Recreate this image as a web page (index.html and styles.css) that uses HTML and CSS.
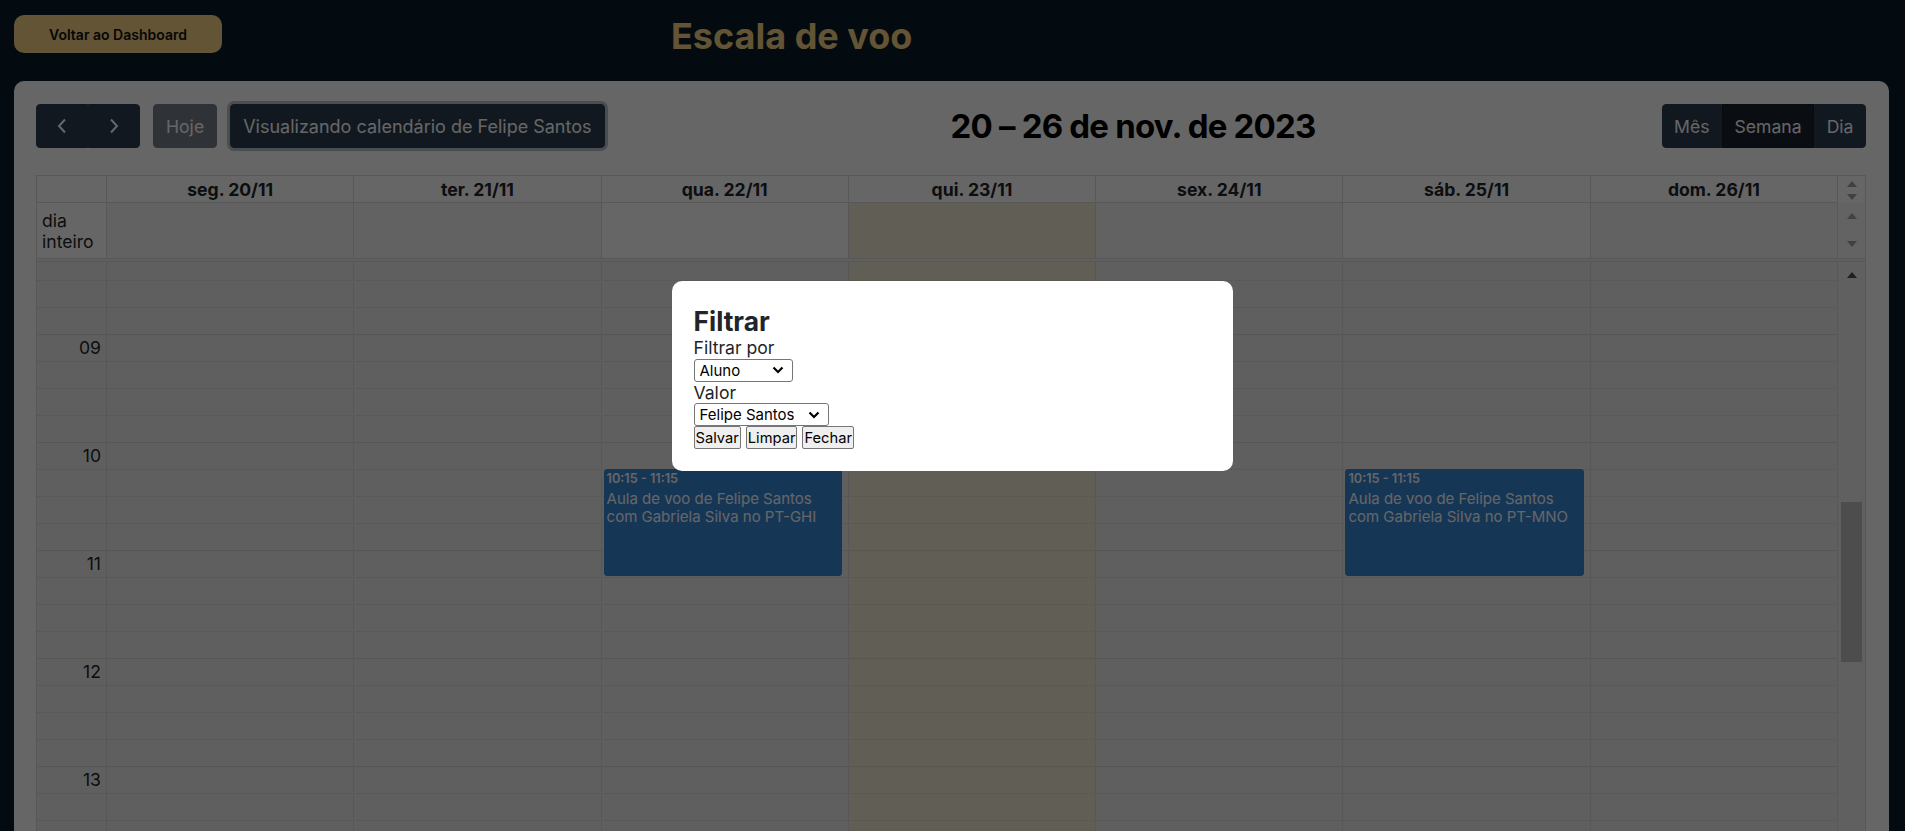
FILE: index.html
```html
<!DOCTYPE html>
<html lang="pt-BR">
<head>
<meta charset="utf-8">
<title>Escala de voo</title>
<link rel="stylesheet" href="styles.css">
</head>
<body>
<div class="page">
  <header class="topbar">
    <button class="back-btn" type="button">Voltar ao Dashboard</button>
    <h1 class="page-title">Escala de voo</h1>
  </header>

  <main class="card">
    <div class="toolbar">
      <div class="chunk">
        <div class="btn-group">
          <button class="fc-btn icon-btn" type="button" aria-label="anterior">
            <svg width="10" height="16" viewBox="0 0 10 16"><path d="M8 1.5 L2 8 L8 14.5" fill="none" stroke="#fff" stroke-width="2"/></svg>
          </button>
          <button class="fc-btn icon-btn" type="button" aria-label="próximo">
            <svg width="10" height="16" viewBox="0 0 10 16"><path d="M2 1.5 L8 8 L2 14.5" fill="none" stroke="#fff" stroke-width="2"/></svg>
          </button>
        </div>
        <button class="fc-btn disabled" type="button">Hoje</button>
        <button class="fc-btn focused" type="button">Visualizando calendário de Felipe Santos</button>
      </div>
      <h2 class="toolbar-title">20 – 26 de nov. de 2023</h2>
      <div class="chunk">
        <div class="btn-group">
          <button class="fc-btn" type="button">Mês</button>
          <button class="fc-btn active" type="button">Semana</button>
          <button class="fc-btn" type="button">Dia</button>
        </div>
      </div>
    </div>

    <div class="cal">
      <div class="row head-row">
        <div class="cell axis-cell"></div>
        <div class="cell day-head">seg. 20/11</div>
        <div class="cell day-head">ter. 21/11</div>
        <div class="cell day-head">qua. 22/11</div>
        <div class="cell day-head">qui. 23/11</div>
        <div class="cell day-head">sex. 24/11</div>
        <div class="cell day-head">sáb. 25/11</div>
        <div class="cell day-head">dom. 26/11</div>
        <div class="sb-cell sb-head"><span class="arr up dim"></span><span class="arr down dim"></span></div>
      </div>

      <div class="row allday-row">
        <div class="cell allday-label">dia inteiro</div>
        <div class="cell allday shade"></div>
        <div class="cell allday shade"></div>
        <div class="cell allday"></div>
        <div class="cell allday today"></div>
        <div class="cell allday shade"></div>
        <div class="cell allday"></div>
        <div class="cell allday shade"></div>
        <div class="sb-cell sb-allday"><span class="arr up dim"></span><span class="arr down dim"></span></div>
      </div>

      <div class="divider"></div>

      <div class="tg-body">
        <div class="tg-slots">
          <div class="slot first"><span class="slot-label"></span></div>
          <div class="slot"><span class="slot-label"></span></div>
          <div class="slot"><span class="slot-label"></span></div>
          <div class="slot hour"><span class="slot-label">09</span></div>
          <div class="slot"><span class="slot-label"></span></div>
          <div class="slot"><span class="slot-label"></span></div>
          <div class="slot"><span class="slot-label"></span></div>
          <div class="slot hour"><span class="slot-label">10</span></div>
          <div class="slot"><span class="slot-label"></span></div>
          <div class="slot"><span class="slot-label"></span></div>
          <div class="slot"><span class="slot-label"></span></div>
          <div class="slot hour"><span class="slot-label">11</span></div>
          <div class="slot"><span class="slot-label"></span></div>
          <div class="slot"><span class="slot-label"></span></div>
          <div class="slot"><span class="slot-label"></span></div>
          <div class="slot hour"><span class="slot-label">12</span></div>
          <div class="slot"><span class="slot-label"></span></div>
          <div class="slot"><span class="slot-label"></span></div>
          <div class="slot"><span class="slot-label"></span></div>
          <div class="slot hour"><span class="slot-label">13</span></div>
          <div class="slot"><span class="slot-label"></span></div>
          <div class="slot"><span class="slot-label"></span></div>
        </div>

        <div class="tg-cols">
          <div class="tg-axis"></div>
          <div class="tg-col"></div>
          <div class="tg-col"></div>
          <div class="tg-col">
            <div class="ev ev-1015">
              <div class="ev-time">10:15 - 11:15</div>
              <div class="ev-title">Aula de voo de Felipe Santos com Gabriela Silva no PT-GHI</div>
            </div>
          </div>
          <div class="tg-col today"></div>
          <div class="tg-col"></div>
          <div class="tg-col">
            <div class="ev ev-1015">
              <div class="ev-time">10:15 - 11:15</div>
              <div class="ev-title">Aula de voo de Felipe Santos com Gabriela Silva no PT-MNO</div>
            </div>
          </div>
          <div class="tg-col"></div>
        </div>

        <div class="tg-scroll">
          <span class="arr up"></span>
          <div class="thumb"></div>
        </div>
      </div>
    </div>
  </main>
</div>

<div class="backdrop"></div>

<div class="modal" role="dialog">
  <h2 class="modal-title">Filtrar</h2>
  <label class="field-label" for="f-tipo">Filtrar por</label>
  <select id="f-tipo" class="sel sel-type">
    <option>Aluno</option>
    <option>Instrutor</option>
    <option>Aeronave</option>
  </select>
  <label class="field-label" for="f-valor">Valor</label>
  <select id="f-valor" class="sel sel-value">
    <option>Felipe Santos</option>
    <option>Gabriela Silva</option>
  </select>
  <div class="modal-actions">
    <button class="mbtn" type="button">Salvar</button>
    <button class="mbtn" type="button">Limpar</button>
    <button class="mbtn" type="button">Fechar</button>
  </div>
</div>
</body>
</html>
```

FILE: styles.css
```css
* {
  box-sizing: border-box;
  margin: 0;
  padding: 0;
}

html, body {
  height: 100%;
  overflow: hidden;
}

body {
  background: #0a1c28;
  font-family: Inter, "Noto Sans", sans-serif;
  color: #212529;
}

.page {
  padding: 14px 16px 0 14px;
}

/* top bar */
.topbar {
  display: flex;
  align-items: flex-start;
  height: 67px;
}

.back-btn {
  margin-top: 1px;
  width: 208px;
  height: 38px;
  border: none;
  border-radius: 10px;
  background: #f5d384;
  color: #111;
  font-family: Inter, sans-serif;
  font-size: 14px;
  font-weight: 600;
}

.page-title {
  margin-left: 449px;
  font-size: 36px;
  line-height: 44px;
  font-weight: 700;
  color: #f5d384;
}

/* card */
.card {
  background: #fff;
  border-radius: 10px;
  padding: 23px 23px 0 22px;
  height: 820px;
}

.toolbar {
  display: flex;
  justify-content: space-between;
  align-items: center;
  margin-bottom: 27px;
}

.chunk {
  display: flex;
  align-items: center;
}

.chunk > * + * {
  margin-left: 13px;
}

.btn-group {
  display: flex;
}

.fc-btn {
  height: 44px;
  padding: 0 12px;
  background: #2c3e50;
  border: 1px solid #2c3e50;
  border-radius: 4px;
  color: #fff;
  font-family: Inter, sans-serif;
  font-size: 17.6px;
  font-weight: 400;
  display: flex;
  align-items: center;
  justify-content: center;
}

.btn-group .fc-btn {
  border-radius: 0;
  padding: 0 11.5px;
}

.btn-group .fc-btn:first-child {
  border-radius: 4px 0 0 4px;
}

.btn-group .fc-btn:last-child {
  border-radius: 0 4px 4px 0;
}

.icon-btn {
  width: 52px;
}

.fc-btn.disabled {
  opacity: 0.65;
}

.fc-btn.focused {
  padding: 0 12px;
  font-size: 18px;
  box-shadow: 0 0 0 3px #bcc3cb;
}

.fc-btn.active {
  background: #1a252f;
  border-color: #151e27;
}

.toolbar-title {
  font-size: 33px;
  letter-spacing: -0.8px;
  line-height: 44px;
  font-weight: 700;
  color: #000;
}

/* calendar grid */
.cal {
  border-top: 1px solid #ddd;
  border-left: 1px solid #ddd;
  border-right: 1px solid #ddd;
}

.row {
  display: grid;
  grid-template-columns: 70px repeat(7, minmax(0, 1fr)) 27px;
}

.cell {
  border-right: 1px solid #ddd;
}

.head-row .cell {
  height: 27px;
  border-bottom: 1px solid #ddd;
  background: #fff;
}

.day-head {
  text-align: center;
  font-size: 17.6px;
  line-height: 21px;
  font-weight: 700;
  padding-top: 3px;
}

.sb-cell {
  display: flex;
  flex-direction: column;
  align-items: center;
}

.sb-head {
  background: #fff;
  justify-content: center;
  gap: 7px;
  padding-top: 2px;
}

.allday-row .cell {
  height: 55px;
}

.allday-label {
  font-size: 17.6px;
  line-height: 21px;
  padding: 7px 4px 0 5px;
  background: #fff;
}

.allday {
  background: #fff;
}

.allday.shade {
  background: #f5f5f5;
}

.allday.today {
  background: #f2ecd5;
}

.sb-allday {
  background: #f7f7f7;
  justify-content: space-between;
  padding: 10px 0 11px;
}

.arr {
  display: block;
  width: 0;
  height: 0;
  border-left: 5.5px solid transparent;
  border-right: 5.5px solid transparent;
}

.arr.up {
  border-bottom: 6px solid #505050;
}

.arr.down {
  border-top: 6px solid #505050;
}

.arr.up.dim {
  border-bottom-color: #a3a3a3;
}

.arr.down.dim {
  border-top-color: #a3a3a3;
}

.divider {
  height: 4px;
  border-top: 1px solid #ddd;
  border-bottom: 1px solid #ddd;
  background: #eee;
}

.tg-body {
  display: grid;
  grid-template-columns: minmax(0, 1fr) 27px;
  background: #eee;
  height: 620px;
}

.tg-slots {
  grid-area: 1 / 1;
}

.slot {
  display: flex;
  height: 27px;
  border-top: 1px dotted #d2d2d2;
}

.slot.first {
  height: 18px;
  border-top: none;
}

.slot.hour {
  border-top: 1px solid #d8d8d8;
}

.slot-label {
  width: 70px;
  text-align: right;
  padding: 2px 6px 0 0;
  font-size: 17.6px;
  line-height: 21px;
}

.tg-cols {
  grid-area: 1 / 1;
  display: grid;
  grid-template-columns: 70px repeat(7, minmax(0, 1fr));
}

.tg-axis,
.tg-col {
  border-right: 1px solid #ddd;
}

.tg-col {
  position: relative;
}

.tg-col.today {
  background: rgba(255, 215, 70, 0.15);
}

.tg-scroll {
  grid-area: 1 / 2;
  position: relative;
  background: #f1f1f1;
  display: flex;
  flex-direction: column;
  align-items: center;
  padding-top: 10px;
}

.thumb {
  position: absolute;
  top: 240px;
  left: 3px;
  right: 3px;
  height: 160px;
  background: #c1c1c1;
}

/* events */
.ev {
  position: absolute;
  top: 207px;
  height: 107px;
  left: 2px;
  right: 2.5%;
  background: #3788d8;
  border: 1px solid #3788d8;
  border-radius: 3px;
  color: #fff;
  padding: 1px 1px 0 2px;
  overflow: hidden;
}

.ev-time {
  font-size: 12.7px;
  font-weight: 600;
  line-height: 15px;
  margin-bottom: 4px;
  white-space: nowrap;
}

.ev-title {
  font-size: 15px;
  line-height: 18px;
}

/* modal */
.backdrop {
  position: fixed;
  inset: 0;
  background: rgba(0, 0, 0, 0.6);
}

.modal {
  position: fixed;
  top: 281px;
  left: calc(50% - 281px);
  width: 561px;
  background: #fff;
  border-radius: 10px;
  padding: 24px 22px 22px;
  color: #212529;
}

.modal-title {
  font-size: 26.4px;
  font-weight: 700;
  line-height: 32px;
}

.field-label {
  display: block;
  font-size: 17.6px;
  line-height: 21.5px;
}

.sel {
  display: block;
  height: 23px;
  font-family: Inter, sans-serif;
  font-size: 15px;
  color: #000;
  border: 1px solid #767676;
  border-radius: 3px;
  padding: 0 24px 0 5px;
  appearance: none;
  -webkit-appearance: none;
  background: #fff url("data:image/svg+xml;utf8,<svg xmlns='http://www.w3.org/2000/svg' width='12' height='8' viewBox='0 0 12 8'><path d='M1.5 1.5 L6 6 L10.5 1.5' fill='none' stroke='%23000' stroke-width='2.2'/></svg>") no-repeat right 8px center;
}

.sel-type {
  width: 99px;
}

.sel-value {
  width: 135px;
}

.modal-actions {
  display: flex;
  gap: 5px;
}

.mbtn {
  height: 23px;
  padding: 0 1px;
  font-family: Inter, sans-serif;
  font-size: 14.7px;
  color: #000;
  background: #efefef;
  border: 1px solid #767676;
  border-radius: 2px;
}
```
